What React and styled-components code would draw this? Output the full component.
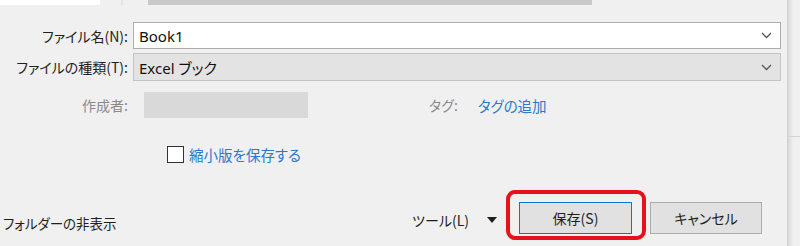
import React from 'react';
import styled, { createGlobalStyle } from 'styled-components';

const GlobalStyle = createGlobalStyle`
  html, body {
    margin: 0;
    padding: 0;
    background: #f0f0f0;
  }
  body {
    font-family: "Noto Sans CJK JP", "Noto Sans", sans-serif;
    font-feature-settings: "palt";
    color: #1e1e1e;
  }
`;

const Dialog = styled.div`
  width: 800px;
  height: 246px;
  overflow: hidden;
  display: flex;
  background: #f0f0f0;
`;

const Content = styled.div`
  width: 788px;
  display: flex;
  flex-direction: column;
`;

const Edge = styled.div`
  width: 12px;
  display: flex;
  flex-direction: column;
  border-left: 1px solid #d0d0d0;
  background: linear-gradient(to right, #d8d8d8 0, #e6e6e6 3px, #f0f0f0 5px);
`;

const EdgeNotch = styled.div`
  margin-top: 136px;
  height: 1px;
  background: #d4d4d4;
`;

const TopStrip = styled.div`
  height: 5px;
  display: flex;
`;

const TopPiece = styled.div`
  width: ${(p) => p.$w}px;
  margin-left: ${(p) => p.$ml || 0}px;
  background: ${(p) => p.$bg};
`;

const Row = styled.div`
  display: flex;
  align-items: center;
  margin-top: ${(p) => p.$mt}px;
  height: ${(p) => p.$h}px;
`;

const Label = styled.div`
  width: 128px;
  text-align: right;
  font-size: 14px;
  color: ${(p) => (p.$muted ? '#8a8a8a' : '#1e1e1e')};
  white-space: nowrap;
`;

const Field = styled.div`
  margin-left: 5px;
  width: 648px;
  height: 100%;
  box-sizing: border-box;
  display: flex;
  align-items: center;
  padding: 0 8px 0 5px;
  border: 1px solid ${(p) => (p.$select ? '#c4c4c4' : '#adadad')};
  background: ${(p) => (p.$select ? '#e3e3e3' : '#ffffff')};
  font-size: 15px;
  color: #111;
`;

const FieldText = styled.span`
  flex: 1;
  font-family: "Noto Sans", "Noto Sans CJK JP", sans-serif;
`;

const Chevron = () => (
  <svg width="11" height="7" viewBox="0 0 11 7">
    <polyline points="1,1 5.5,5.5 10,1" fill="none" stroke="#555" strokeWidth="1.3" />
  </svg>
);

const AuthorBox = styled.div`
  margin-left: 16px;
  width: 164px;
  height: 26px;
  background: #d9d9d9;
`;

const TagGroup = styled.div`
  margin-left: 121px;
  display: flex;
  align-items: center;
  gap: 20px;
  font-size: 14px;
`;

const MutedText = styled.span`
  color: #8a8a8a;
`;

const Link = styled.span`
  color: #2b79cc;
  font-size: 14.5px;
`;

const CheckRow = styled.div`
  margin-top: 28px;
  margin-left: 167px;
  height: 17px;
  display: flex;
  align-items: center;
  gap: 5px;
`;

const CheckBox = styled.span`
  width: 17px;
  height: 17px;
  box-sizing: border-box;
  border: 1px solid #333;
  background: #fff;
`;

const BottomBar = styled.div`
  margin-top: 27px;
  height: 50px;
  display: flex;
  align-items: flex-start;
`;

const FolderToggle = styled.div`
  margin-left: 3px;
  margin-top: 23px;
  font-size: 13.5px;
  color: #1e1e1e;
`;

const Tools = styled.div`
  margin-left: auto;
  margin-top: 20px;
  display: flex;
  align-items: center;
  font-size: 14px;
`;

const Caret = styled.span`
  margin-left: 18px;
  margin-right: 9px;
  width: 0;
  height: 0;
  border-left: 5px solid transparent;
  border-right: 5px solid transparent;
  border-top: 6px solid #1e1e1e;
`;

const Highlight = styled.div`
  box-sizing: border-box;
  width: 140px;
  height: 50px;
  border: 4px solid #e6121b;
  border-radius: 9px;
  padding: 8px 10px 2px 9px;
`;

const Button = styled.button`
  width: ${(p) => p.$w}px;
  height: 32px;
  box-sizing: border-box;
  margin: 0;
  padding: 0;
  font-family: "Noto Sans CJK JP", sans-serif;
  font-feature-settings: "palt";
  font-size: 14px;
  color: #1e1e1e;
  background: #e1e1e1;
  border: 1px solid ${(p) => (p.$primary ? '#0078d7' : '#adadad')};
  box-shadow: ${(p) => (p.$primary ? 'inset 0 0 0 1px #e1e1e1' : 'none')};
`;

const CancelWrap = styled.div`
  margin-left: 4px;
  margin-top: 12px;
  margin-right: 25px;
`;

export default function App() {
  return (
    <>
      <GlobalStyle />
      <Dialog>
        <Content>
          <TopStrip>
            <TopPiece $w={100} $bg="#ffffff" />
            <TopPiece $w={2} $ml={21} $bg="#e4e4e4" />
            <TopPiece $w={444} $ml={25} $bg="#c9c9c9" />
          </TopStrip>

          <Row $mt={17} $h={27}>
            <Label>ファイル名(N):</Label>
            <Field>
              <FieldText>Book1</FieldText>
              <Chevron />
            </Field>
          </Row>

          <Row $mt={4} $h={28}>
            <Label>ファイルの種類(T):</Label>
            <Field $select>
              <FieldText>Excel ブック</FieldText>
              <Chevron />
            </Field>
          </Row>

          <Row $mt={11} $h={26}>
            <Label $muted>作成者:</Label>
            <AuthorBox />
            <TagGroup>
              <MutedText>タグ:</MutedText>
              <Link>タグの追加</Link>
            </TagGroup>
          </Row>

          <CheckRow>
            <CheckBox />
            <Link>縮小版を保存する</Link>
          </CheckRow>

          <BottomBar>
            <FolderToggle>フォルダーの非表示</FolderToggle>
            <Tools>
              ツール(L)
              <Caret />
            </Tools>
            <Highlight>
              <Button $primary $w={113}>保存(S)</Button>
            </Highlight>
            <CancelWrap>
              <Button $w={112}>キャンセル</Button>
            </CancelWrap>
          </BottomBar>
        </Content>
        <Edge>
          <EdgeNotch />
        </Edge>
      </Dialog>
    </>
  );
}
